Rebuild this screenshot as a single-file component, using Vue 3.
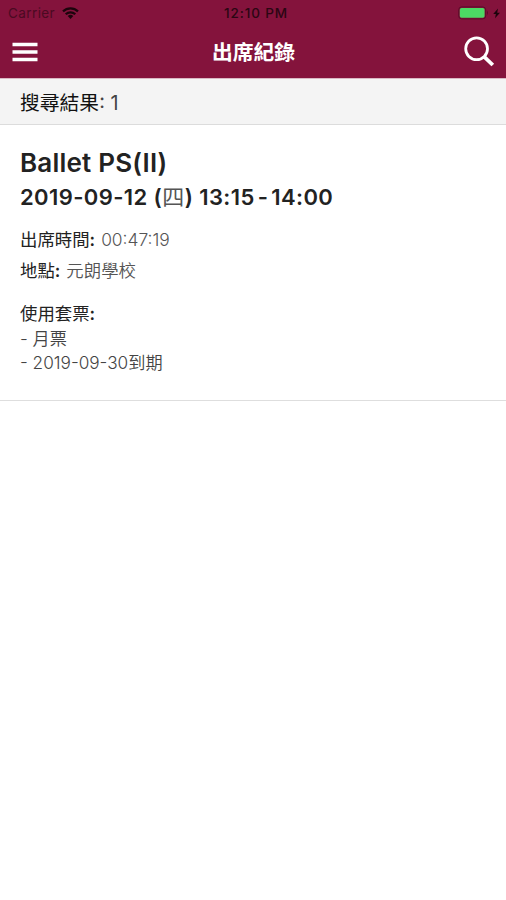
<script setup>
import { ref } from 'vue'

const records = ref([
    {
        id: 1,
        name: 'Ballet PS(II)',
        date: '2019-09-12',
        weekday: '四',
        start: '13:15',
        end: '14:00',
        checkIn: '00:47:19',
        place: '元朗學校',
        tickets: ['月票', '2019-09-30到期'],
    },
])
</script>

<template>
    <div class="app">
        <header class="header">
            <div class="status-bar">
                <div class="status-left">
                    <span class="carrier">Carrier</span>
                    <svg class="wifi" viewBox="0 0 17 12" width="17" height="12">
                        <path d="M1 4.4a10.8 10.8 0 0 1 15 0M3.7 7.2a7 7 0 0 1 9.6 0" />
                        <path class="wifi-dot" d="M5.7 9.1a4.2 4.2 0 0 1 5.6 0L8.5 12z" />
                    </svg>
                </div>
                <span class="clock">12:10 PM</span>
                <div class="status-right">
                    <svg viewBox="0 0 44 14" width="44" height="14">
                        <rect class="battery-case" x="0.7" y="0.9" width="27" height="12" rx="3" />
                        <rect class="battery-level" x="1.8" y="2" width="24.8" height="9.8" rx="1.8" />
                        <path class="battery-tip" d="M29 4.6q2 2.3 0 4.6z" />
                        <path d="M40 2.6l-4.8 5.4h2.7l-0.9 4.2 5-5.4h-2.8z" />
                    </svg>
                </div>
            </div>
            <nav class="nav-bar">
                <button class="icon-button" aria-label="Menu">
                    <svg class="menu-icon" viewBox="0 0 26 20" width="26" height="20">
                        <path d="M0.5 2.5h25M0.5 10h25M0.5 17.5h25" />
                    </svg>
                </button>
                <h1 class="nav-title">出席紀錄</h1>
                <button class="icon-button" aria-label="Search">
                    <svg class="search-icon" viewBox="0 0 32 32" width="32" height="32">
                        <circle cx="13.6" cy="12.8" r="10.9" />
                        <path class="handle" d="M21 20.6l8.8 8.4" />
                    </svg>
                </button>
            </nav>
        </header>

        <div class="result-bar"><span class="result-label">搜尋結果</span>: {{ records.length }}</div>

        <article v-for="record in records" :key="record.id" class="record">
            <h2 class="record-name">{{ record.name }}</h2>
            <p class="record-date">
                {{ record.date }} (<span class="weekday">{{ record.weekday }}</span>) {{ record.start }}<span class="dash">-</span>{{ record.end }}
            </p>
            <dl class="details">
                <div class="detail">
                    <dt>出席時間<b>:</b></dt>
                    <dd>{{ record.checkIn }}</dd>
                </div>
                <div class="detail">
                    <dt>地點<b>:</b></dt>
                    <dd>{{ record.place }}</dd>
                </div>
            </dl>
            <div class="tickets">
                <p class="tickets-label">使用套票<b>:</b></p>
                <p v-for="ticket in record.tickets" :key="ticket">- {{ ticket }}</p>
            </div>
        </article>
    </div>
</template>

<style>
body {
    background: #fff;
}
</style>

<style scoped>
.app {
    min-height: 900px;
    box-sizing: border-box;
    background: #fff;
    color: #222;
    font-family: Inter, 'Noto Sans CJK TC', sans-serif;
}

h1,
h2,
p,
dl,
dd {
    margin: 0;
}

.header {
    height: 78px;
    background: #84133c;
}

.status-bar {
    display: grid;
    grid-template-columns: 1fr auto 1fr;
    align-items: center;
    height: 26px;
    padding: 0 6px 0 8px;
    font-size: 13.5px;
    color: #2b0613;
}

.status-left {
    display: flex;
    align-items: center;
    gap: 7px;
}

.carrier {
    letter-spacing: 0.4px;
    color: #4b0a22;
}

.wifi {
    fill: none;
    stroke: #1c040c;
    stroke-width: 2.2;
}

.wifi .wifi-dot {
    fill: #1c040c;
    stroke: none;
}

.clock {
    margin-left: 4px;
    font-size: 13.5px;
    font-weight: 500;
    letter-spacing: 0.9px;
}

.status-right {
    display: flex;
    justify-content: flex-end;
    fill: #1c040c;
}

.status-right svg {
    margin-right: -2px;
}

.status-right .battery-case {
    fill: none;
    stroke: #5a0d2a;
}

.status-right .battery-tip {
    fill: #5a0d2a;
}

.status-right .battery-level {
    fill: #4cd964;
}

.nav-bar {
    display: flex;
    align-items: center;
    justify-content: space-between;
    height: 52px;
    padding: 0 11px 0 12px;
}

.icon-button {
    display: flex;
    width: 32px;
    padding: 0;
    border: none;
    background: none;
}

.menu-icon,
.search-icon {
    fill: none;
    stroke: #fff;
    stroke-width: 3.4;
}

.search-icon {
    stroke-width: 2.8;
}

.search-icon .handle {
    stroke-width: 3.8;
}

.nav-title {
    padding-top: 1px;
    font-size: 20.8px;
    line-height: 30px;
    font-weight: 700;
    color: #fff;
}

.result-bar {
    height: 47px;
    box-sizing: border-box;
    padding-left: 20px;
    border-top: 1px solid #d9b9c4;
    border-bottom: 1px solid #dcdcdc;
    background: #f4f4f4;
    font-size: 19.8px;
    line-height: 48px;
    color: #444;
}

.result-label {
    color: #111;
}

.record {
    height: 276px;
    box-sizing: border-box;
    padding: 20px 20px 0;
    border-bottom: 1px solid #dedede;
}

.record-name {
    font-size: 26px;
    line-height: 36px;
    font-weight: 600;
    letter-spacing: 0.2px;
}

.record-date {
    font-size: 22px;
    line-height: 32px;
    font-weight: 600;
    letter-spacing: 0.4px;
}

.weekday {
    font-weight: 400;
    color: #555;
}

.dash {
    margin: 0 3px;
}

.details {
    margin-top: 12px;
}

.detail {
    display: flex;
    gap: 6px;
    font-size: 17.4px;
    line-height: 30.5px;
}

.detail b,
.tickets-label b {
    font-weight: 600;
}

.detail dd {
    font-weight: 350;
    color: #555;
}

.tickets {
    margin-top: 16px;
    font-size: 17.2px;
    font-weight: 350;
    line-height: 24.6px;
    color: #444;
}

.tickets-label {
    font-size: 17.4px;
    font-weight: 400;
    color: #222;
}
</style>
